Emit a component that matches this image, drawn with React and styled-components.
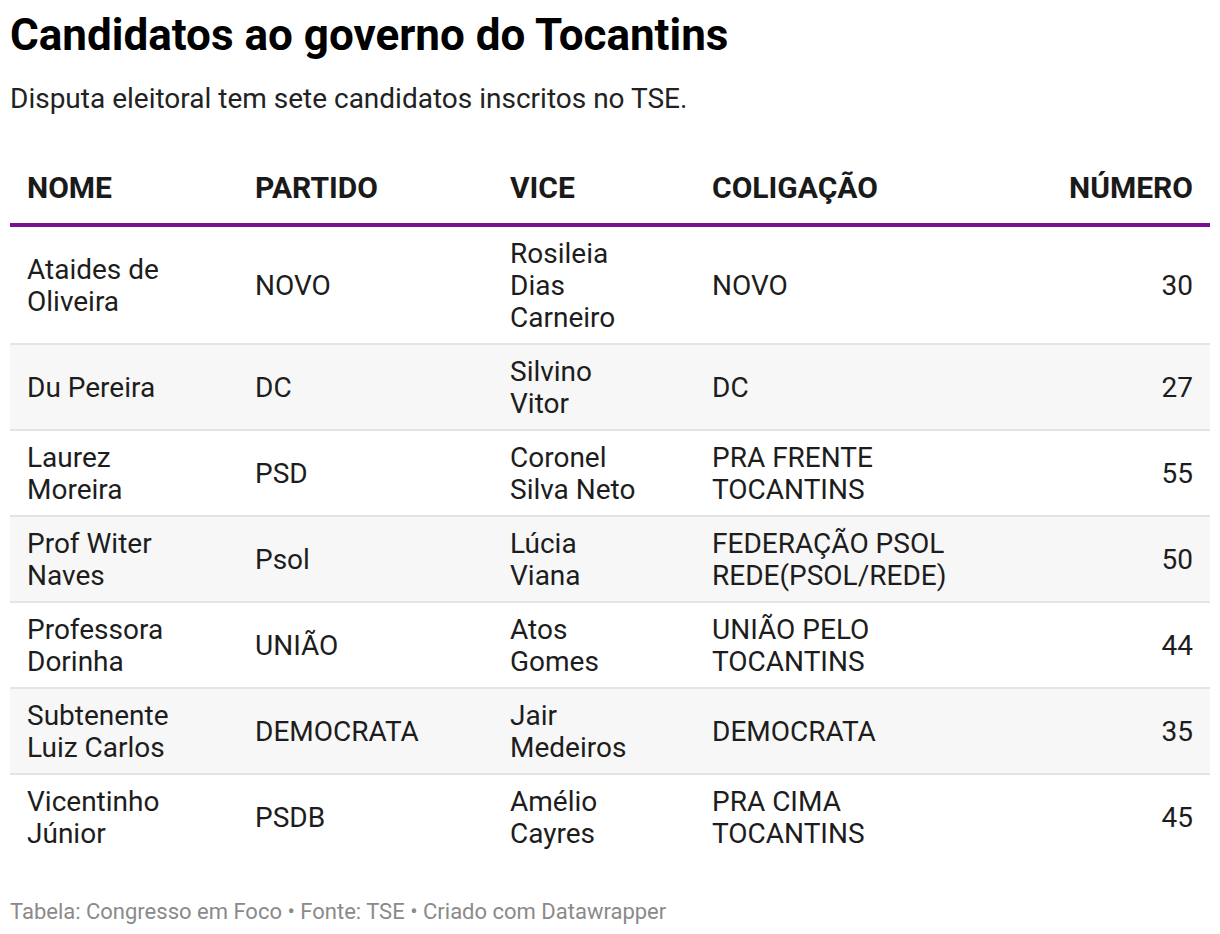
import React from 'react';
import styled, { createGlobalStyle } from 'styled-components';

const GlobalStyle = createGlobalStyle`
    body {
        margin: 0;
        background: #fff;
        font-family: Roboto, "Liberation Sans", sans-serif;
        color: #1d1d1d;
    }
`

const Wrap = styled.div`
    width: 1200px;
    padding: 10px;
`

const Title = styled.h1`
    margin: 0;
    font-size: 44px;
    line-height: 50px;
    font-weight: 700;
    color: #000;
`

const Subtitle = styled.p`
    margin: 21px 0 0;
    font-size: 28px;
    line-height: 36px;
    color: #222;
`

const Table = styled.div`
    margin-top: 55px;
`

const Row = styled.div`
    display: grid;
    grid-template-columns: 228px 255px 202px 1fr auto;
    align-items: center;
    padding: 11px 17px 9px;
    background: ${props => props.$shaded ? '#f7f7f7' : '#fff'};
    border-bottom: 2px solid #e4e4e4;

    &:last-child {
        border-bottom: 0;
    }
`

const HeadRow = styled(Row)`
    align-items: end;
    padding: 0 17px 19px;
    border-bottom: 4px solid #7b0f94;
`

const HeadCell = styled.div`
    font-size: 30px;
    line-height: 32px;
    font-weight: 700;
    text-transform: uppercase;
    color: #1a1a1a;
    text-align: ${props => props.$right ? 'right' : 'left'};
`

const Cell = styled.div`
    font-size: 28px;
    line-height: 32px;
    color: #1d1d1d;
    max-width: ${props => props.$max || 'none'};
    text-align: ${props => props.$right ? 'right' : 'left'};
`

const Footer = styled.div`
    margin-top: 38px;
    font-size: 22px;
    line-height: 30px;
    color: #8a8a8a;
`

const rows = [
    ['Ataides de Oliveira', 'NOVO', 'Rosileia Dias Carneiro', 'NOVO', '30'],
    ['Du Pereira', 'DC', 'Silvino Vitor', 'DC', '27'],
    ['Laurez Moreira', 'PSD', 'Coronel Silva Neto', 'PRA FRENTE TOCANTINS', '55'],
    ['Prof Witer Naves', 'Psol', 'Lúcia Viana', 'FEDERAÇÃO PSOL REDE(PSOL/REDE)', '50'],
    ['Professora Dorinha', 'UNIÃO', 'Atos Gomes', 'UNIÃO PELO TOCANTINS', '44'],
    ['Subtenente Luiz Carlos', 'DEMOCRATA', 'Jair Medeiros', 'DEMOCRATA', '35'],
    ['Vicentinho Júnior', 'PSDB', 'Amélio Cayres', 'PRA CIMA TOCANTINS', '45'],
]

const App = () => {
    return (
        <Wrap>
            <GlobalStyle />
            <Title>Candidatos ao governo do Tocantins</Title>
            <Subtitle>Disputa eleitoral tem sete candidatos inscritos no TSE.</Subtitle>
            <Table>
                <HeadRow>
                    <HeadCell>Nome</HeadCell>
                    <HeadCell>Partido</HeadCell>
                    <HeadCell>Vice</HeadCell>
                    <HeadCell>Coligação</HeadCell>
                    <HeadCell $right>Número</HeadCell>
                </HeadRow>
                {rows.map((r, i) => (
                    <Row key={r[0]} $shaded={i % 2 === 1}>
                        <Cell $max='170px'>{r[0]}</Cell>
                        <Cell>{r[1]}</Cell>
                        <Cell $max='130px'>{r[2]}</Cell>
                        <Cell $max='260px'>{r[3]}</Cell>
                        <Cell $right>{r[4]}</Cell>
                    </Row>
                ))}
            </Table>
            <Footer>Tabela: Congresso em Foco • Fonte: TSE • Criado com Datawrapper</Footer>
        </Wrap>
    );
};

export default App;
